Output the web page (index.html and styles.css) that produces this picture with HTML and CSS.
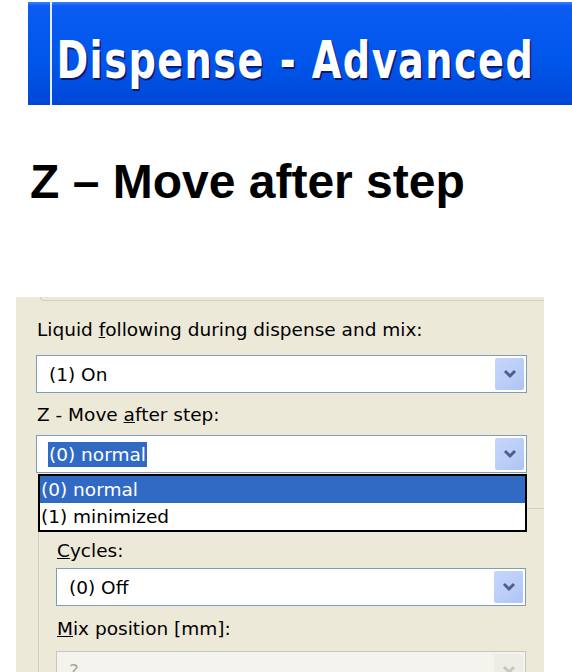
FILE: index.html
```html
<!DOCTYPE html>
<html>
<head>
<meta charset="utf-8">
<link rel="stylesheet" href="styles.css">
</head>
<body>
<div class="banner">
  <div class="banner-edge"></div>
  <div class="banner-line"></div>
  <div class="banner-title">Dispense - Advanced</div>
</div>
<h1 class="heading">Z – Move after step</h1>
<div class="panel">
  <div class="group-top"></div>
  <div class="section">
    <div class="label">Liquid <u>f</u>ollowing during dispense and mix:</div>
    <div class="combo">
      <span class="combo-text">(1) On</span>
      <span class="combo-btn"><svg width="14" height="10" viewBox="0 0 14 10"><path d="M2 2 L7 7 L12 2" fill="none" stroke="#4D6185" stroke-width="3"/></svg></span>
    </div>
    <div class="label label-2">Z - Move <u>a</u>fter step:</div>
    <div class="combo">
      <span class="combo-text"><span class="sel">(0) normal</span></span>
      <span class="combo-btn"><svg width="14" height="10" viewBox="0 0 14 10"><path d="M2 2 L7 7 L12 2" fill="none" stroke="#4D6185" stroke-width="3"/></svg></span>
    </div>
  </div>
  <div class="group-mix">
    <div class="label"><u>C</u>ycles:</div>
    <div class="combo">
      <span class="combo-text">(0) Off</span>
      <span class="combo-btn"><svg width="14" height="10" viewBox="0 0 14 10"><path d="M2 2 L7 7 L12 2" fill="none" stroke="#4D6185" stroke-width="3"/></svg></span>
    </div>
    <div class="label label-mix"><u>M</u>ix position [mm]:</div>
    <div class="combo combo-disabled">
      <span class="combo-text">?</span>
      <span class="combo-btn"><svg width="14" height="10" viewBox="0 0 14 10"><path d="M2 2 L7 7 L12 2" fill="none" stroke="#C9C7BA" stroke-width="3"/></svg></span>
    </div>
  </div>
  <div class="droplist">
    <div class="option option-active">(0) normal</div>
    <div class="option">(1) minimized</div>
  </div>
</div>
</body>
</html>
```

FILE: styles.css
```css
html, body {
  margin: 0;
  padding: 0;
  background: #ffffff;
  overflow: hidden;
}

.banner {
  margin-left: 28px;
  margin-top: 2px;
  height: 103px;
  display: flex;
  overflow: hidden;
  background: linear-gradient(to bottom, #3b80ff 0px, #0a5cf2 4px, #0055ea 60%, #0047d6 100%);
}

.banner-edge {
  width: 22px;
  flex: none;
}

.banner-line {
  width: 2px;
  flex: none;
  background: #e6eeff;
}

.banner-title {
  padding-left: 6px;
  padding-top: 28px;
  font-family: "DejaVu Sans", sans-serif;
  font-weight: bold;
  font-size: 52px;
  letter-spacing: 2px;
  line-height: 60px;
  white-space: nowrap;
  color: #ffffff;
  text-shadow: 2px 2px 0 #0a1a6e;
  transform: scaleX(0.735);
  transform-origin: 0 0;
}

.heading {
  margin: 47px 0 0 30px;
  font-family: "Liberation Sans", Arial, sans-serif;
  font-weight: bold;
  font-size: 48px;
  line-height: 60px;
  color: #000000;
}

.panel {
  position: relative;
  margin-left: 16px;
  margin-top: 85px;
  width: 528px;
  height: 380px;
  background: #ece9d8;
  overflow: hidden;
  font-family: "DejaVu Sans", sans-serif;
  font-size: 18.5px;
  color: #000000;
}

.group-top {
  height: 3px;
  margin-left: 24px;
  margin-right: -10px;
  border: 1px solid #d0d0bf;
  border-top: none;
  border-radius: 0 0 0 5px;
}

.section {
  padding-left: 20px;
  padding-right: 17px;
}

.label {
  margin-top: 18px;
  padding-left: 1px;
  height: 22px;
  line-height: 22px;
  white-space: nowrap;
}

.label-2 {
  margin-top: 11px;
}

.combo {
  margin-top: 14px;
  height: 36px;
  border: 1px solid #7f9db9;
  background: #ffffff;
  display: flex;
  align-items: center;
  justify-content: space-between;
  padding: 0 2px 0 12px;
}

.label-2 + .combo {
  margin-top: 9px;
}

.combo-text {
  white-space: nowrap;
}

.sel {
  background: #316ac5;
  color: #ffffff;
  outline: 1px dotted #ffffff;
  padding: 2px 1px;
  margin-left: -1px;
}

.combo-btn {
  width: 29px;
  height: 32px;
  border-radius: 2px;
  background: linear-gradient(135deg, #c6d6fc 0%, #b9cdf8 60%, #adc3f3 100%);
  display: flex;
  align-items: center;
  justify-content: center;
}

.group-mix {
  margin-top: 35px;
  margin-left: 22px;
  margin-right: -20px;
  height: 200px;
  border: 1px solid #d0d0bf;
  border-radius: 5px;
  padding: 0 37px 0 17px;
}

.group-mix .label {
  margin-top: 31px;
}

.group-mix .label-mix {
  margin-top: 12px;
}

.group-mix .combo {
  margin-top: 6px;
}

.group-mix .combo-disabled {
  margin-top: 11px;
  background: #f4f3ee;
  border-color: #c9c7ba;
  color: #aca899;
}

.combo-disabled .combo-btn {
  background: #eeede5;
}

.droplist {
  position: absolute;
  left: 22px;
  top: 177px;
  width: 485px;
  border: 2px solid #000000;
  background: #ffffff;
}

.option {
  height: 27px;
  line-height: 27px;
  padding-left: 1px;
  white-space: nowrap;
}

.option-active {
  background: #316ac5;
  color: #ffffff;
}
```
